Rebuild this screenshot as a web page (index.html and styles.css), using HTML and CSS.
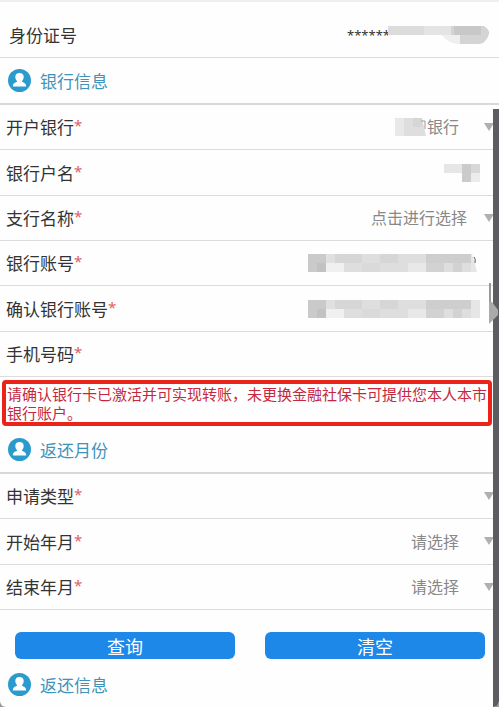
FILE: index.html
```html
<!DOCTYPE html>
<html lang="zh-CN">
<head>
    <meta charset="UTF-8">
    <meta name="viewport" content="width=device-width, initial-scale=1.0">
    <title>返还申请</title>
    <link rel="stylesheet" href="styles.css">
</head>
<body>
    <svg class="defs" width="0" height="0" aria-hidden="true">
        <symbol id="user" viewBox="0 0 23 23">
            <circle cx="11.5" cy="11.5" r="11.5" fill="#2a9bcc"/>
            <path d="M11.5 4C8.800 4 7.300 5.600 7.300 8c0 1.700.7 3.100 1.700 4v.8c-1.800.9-4.200 1.600-4.200 4.700h13.400c0-3.100-2.400-3.800-4.200-4.700V12c1-.9 1.700-2.300 1.700-4 0-2.400-1.500-4-4.200-4z" fill="#fff"/>
        </symbol>
        <symbol id="account-blur" viewBox="0 0 172 18">
            <path d="M0 0h172v18H0z" fill="#dedede"/>
            <path d="M0 0h18v18H0z" fill="#cacaca"/>
            <path d="M9 9h9v9H9z" fill="#c2c2c2"/>
            <path d="M18 0h9v9h-9z" fill="#e0e0e0"/>
            <path d="M18 9h18v9H18z" fill="#f0f0f0"/>
            <path d="M27 0h27v9H27zM72 0h18v9H72z" fill="#d6d6d6"/>
            <path d="M54 9h18v9H54z" fill="#dadada"/>
            <path d="M100 9h18v9h-18z" fill="#e8e8e8"/>
            <path d="M118 0h45v9h-45z" fill="#cecece"/>
            <path d="M118 9h18v9h-18zM145 9h9v9h-9z" fill="#d2d2d2"/>
            <path d="M163 0h9v18h-9z" fill="#e6e6e6"/>
        </symbol>
    </svg>

    <div class="page">
        <form>
            <div class="row id-row">
                <label for="idcard">身份证号</label>
                <input type="text" id="idcard" value="*******">
                <svg class="blur" width="102" height="18" viewBox="0 0 102 18">
                    <path d="M0 0h54v9H0z" fill="#dcdcdc"/>
                    <path d="M36 0h27v9H36z" fill="#e4e4e4"/>
                    <path d="M63 0h33q6 4 5 8-3 10-11 10H72l-9-6z" fill="#d4d4d4"/>
                    <path d="M66 0h27v9H66z" fill="#c8c8c8"/>
                    <path d="M54 9h18v9q-12 0-18-9z" fill="#efefef"/>
                </svg>
            </div>

            <h2><svg width="23" height="23"><use href="#user"/></svg>银行信息</h2>
            <div class="group">
                <div class="row has-select">
                    <label for="bank">开户银行<i>*</i></label>
                    <svg class="blur" width="32" height="18" viewBox="0 0 32 18">
                        <path d="M0 0h27l4 18H0z" fill="#dedede"/>
                        <path d="M0 0h9v18H0z" fill="#e8e8e8"/>
                        <path d="M18 0h9v9h-9z" fill="#d6d6d6"/>
                        <path d="M26 3h4v8" fill="none" stroke="#999"/>
                    </svg>
                    <select id="bank" class="short"><option>银行</option></select>
                </div>
                <div class="row">
                    <label for="owner">银行户名<i>*</i></label>
                    <input type="text" id="owner">
                    <svg class="blur" width="36" height="18" viewBox="0 0 36 18">
                        <path d="M0 0h18v9H0z" fill="#e6e6e6"/>
                        <path d="M18 0h18v9H18z" fill="#d8d8d8"/>
                        <path d="M18 0h9v18h-9z" fill="#cbcbcb"/>
                        <path d="M27 9h9v9h-9z" fill="#ececec"/>
                    </svg>
                </div>
                <div class="row has-select">
                    <label for="branch">支行名称<i>*</i></label>
                    <select id="branch" class="wide"><option>点击进行选择</option></select>
                </div>
                <div class="row">
                    <label for="account">银行账号<i>*</i></label>
                    <input type="text" id="account">
                    <svg class="blur" width="172" height="18"><use href="#account-blur"/><path d="M164 0h8v18h-3l-3-12z" fill="#fefefe"/><path d="M166 3q2 2 1 6" fill="none" stroke="#555"/></svg>
                </div>
                <div class="row">
                    <label for="account2">确认银行账号<i>*</i></label>
                    <input type="text" id="account2">
                    <svg class="blur" width="172" height="18"><use href="#account-blur"/></svg>
                </div>
                <div class="row">
                    <label for="phone">手机号码<i>*</i></label>
                    <input type="text" id="phone">
                </div>
            </div>

            <p class="notice">请确认银行卡已激活并可实现转账，未更换金融社保卡可提供您本人本市银行账户。</p>

            <h2><svg width="23" height="23"><use href="#user"/></svg>返还月份</h2>
            <div class="group">
                <div class="row has-select">
                    <label for="type">申请类型<i>*</i></label>
                    <select id="type"><option></option></select>
                </div>
                <div class="row has-select">
                    <label for="start">开始年月<i>*</i></label>
                    <select id="start"><option>请选择</option></select>
                </div>
                <div class="row has-select">
                    <label for="end">结束年月<i>*</i></label>
                    <select id="end"><option>请选择</option></select>
                </div>
            </div>

            <div class="buttons">
                <button type="button">查询</button>
                <button type="reset">清空</button>
            </div>
        </form>

        <h2 class="last"><svg width="23" height="23"><use href="#user"/></svg>返还信息</h2>

        <div class="side">
            <svg class="handle" width="10" height="41" viewBox="0 0 10 41">
                <path d="M0 0h2v22H0z" fill="#999"/>
                <path d="M0 19h3l6 8v5l-9 9z" fill="#aaa"/>
            </svg>
        </div>
    </div>
</body>
</html>
```

FILE: styles.css
```css
* {
    box-sizing: border-box;
}
body {
    margin: 0;
    background-color: #999;
    color: #333;
    font-family: "Noto Sans CJK SC", sans-serif;
    font-size: 17px;
}
.defs {
    position: absolute;
}
.page {
    position: relative;
    border-top: 2px solid #eee;
    border-radius: 0 0 6px 6px;
    background-color: #fefefe;
    overflow: hidden;
}
.row {
    position: relative;
    display: flex;
    align-items: center;
    height: 45px;
    padding: 0 19px 0 6px;
    border-bottom: 1px solid #dcdcdc;
}
.group .row:nth-child(3n+2) {
    height: 46px;
}
.row label {
    flex: 1;
    line-height: 24px;
    white-space: nowrap;
}
.row i {
    color: #e0606a;
    font-family: "Noto Sans", sans-serif;
    font-size: 15px;
    font-style: normal;
    line-height: 1;
    vertical-align: 3px;
}
.id-row {
    height: 56px;
    padding: 11px 9px 0;
}
.row input {
    width: 120px;
    padding: 0;
    border: none;
    outline: none;
    background: none;
    color: #333;
    font-family: inherit;
    font-size: 16px;
}
.id-row input {
    width: 41px;
    font-family: "Noto Sans", sans-serif;
    font-size: 13px;
}
.blur {
    flex: none;
}
.row select {
    appearance: none;
    width: 180px;
    height: 44px;
    padding: 0 40px 2px 0;
    border: none;
    outline: none;
    background: none;
    color: #888;
    font-family: inherit;
    font-size: 16px;
    text-align-last: right;
}
.row .short {
    width: 72px;
}
.row .wide {
    padding-right: 32px;
}
.has-select {
    padding-right: 0;
}
/* drop-down arrow */
.has-select::after {
    content: "";
    position: absolute;
    right: 5px;
    top: 18px;
    border: 5px solid transparent;
    border-top: 8px solid #b0b0b0;
    border-bottom: 0;
    pointer-events: none;
}
h2 {
    display: flex;
    align-items: center;
    gap: 9px;
    height: 47px;
    margin: 0;
    padding-left: 8px;
    border-bottom: 2px solid #d8d8d8;
    color: #3f93bb;
    font-size: 17px;
    font-weight: normal;
}
.last {
    height: 45px;
    border-bottom: none;
}
.notice {
    margin: 3px 7px 1px 2px;
    padding: 0 1px;
    border: 4px solid #ea2418;
    border-radius: 4px;
    color: #c5283d;
    font-size: 15px;
    line-height: 19px;
}
.buttons {
    display: flex;
    gap: 30px;
    padding: 22px 14px 3px 15px;
}
.buttons button {
    flex: 1;
    height: 27px;
    padding: 0;
    border: none;
    border-radius: 6px;
    background-color: #1e88e9;
    color: #fff;
    font-family: inherit;
    font-size: 18px;
    line-height: 26px;
}
/* dark edge on the right */
.side {
    position: absolute;
    top: 107px;
    right: 0;
    bottom: 0;
    width: 6px;
    background-color: #5b5d60;
}
.handle {
    position: absolute;
    top: 174px;
    right: 0;
}
```
